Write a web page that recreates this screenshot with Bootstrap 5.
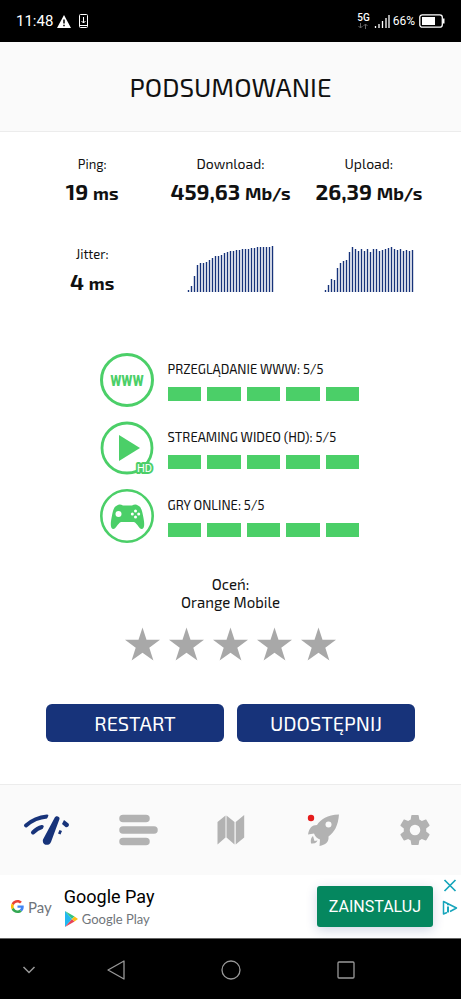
<!DOCTYPE html>
<html lang="pl">
<head>
<meta charset="utf-8">
<meta name="viewport" content="width=device-width, initial-scale=1">
<title>Podsumowanie</title>
<link rel="stylesheet" href="https://cdn.jsdelivr.net/npm/bootstrap@5.3.0/dist/css/bootstrap.min.css">
<style>
  :root { --navy: #17337a; --green: #4bcf68; --panel: #fafafa; --line: #ececec; --grey: #b2b2b2; }
  body { font-family: "Exo 2", Roboto, sans-serif; color: #111; background: #fff; }
  svg { display: block; flex: none; }
  .status-bar { height: 42px; padding: 0 16px; background: #000; color: #fff; font: 15px Roboto, sans-serif; }
  .status-bar .battery-text { font-size: 12px; margin-left: 3px; }
  .net-type { font-size: 10px; line-height: 10px; font-weight: 500; }
  .app-header { height: 90px; background: var(--panel); border-bottom: 1px solid var(--line); }
  .app-header h1 { font-size: 26px; line-height: 32px; font-weight: 400; margin: 0; }
  .metrics { padding: 23px 23px 0; }
  .metric-row { height: 90px; }
  .metric-label { font-size: 13px; line-height: 18px; }
  .metric-label.wide { font-size: 14px; }
  .metric-value { font-size: 22px; line-height: 30px; margin-top: 3px; font-weight: 700; white-space: nowrap; }
  .metric-value small { font-size: 18px; font-weight: 700; }
  .scores { width: 262px; gap: 14px; margin: 55px auto 0; }
  .score-body { flex: 1; margin: 0 2px 0 14px; }
  .score-title { font-size: 13px; line-height: 18px; margin: 7px 0 9px; }
  .blocks { gap: 6px; }
  .blocks span { flex: 1; height: 14px; background: var(--green); }
  .rate-text { font-size: 15px; line-height: 18px; margin-top: 32px; }
  .stars { gap: 9px; margin-top: 16px; }
  .stars button, .tool-btn { border: 0; padding: 0; background: none; color: inherit; }
  .stars button { color: #a8a8a8; }
  .actions { gap: 13px; padding: 0 46px; margin: 43px 0 42px; }
  .btn-navy { --bs-btn-color: #fff; --bs-btn-bg: var(--navy); --bs-btn-hover-color: #fff; --bs-btn-hover-bg: #102862;
    flex: 1; font-size: 20px; line-height: 26px; padding: 6px; border: 0; border-radius: 6px; }
  .tab-bar { height: 91px; background: var(--panel); border-top: 1px solid var(--line); color: var(--grey); }
  .tab-bar a { color: inherit; }
  .tab-bar a.current { color: var(--navy); }
  .ad { height: 63px; padding: 0 3px 0 11px; font-family: Roboto, sans-serif; }
  .pay-name { font: 15px Lato, sans-serif; color: #70757a; }
  .ad-title { font-size: 18px; line-height: 24px; color: #000; }
  .play-name { font: 13px/20px Lato, sans-serif; color: #70757a; }
  .btn-install { --bs-btn-color: #fff; --bs-btn-bg: #05875f; --bs-btn-hover-color: #fff; --bs-btn-hover-bg: #04704f;
    font-size: 16px; line-height: 25px; padding: 8px 12px; border: 0; border-radius: 3px; box-shadow: 0 3px 12px #17337a33; }
  .system-nav { height: 62px; background: #000; color: #999; border-top: 1px solid #666; }
  .system-nav .edge { width: 58px; }
  .system-nav .main-key { flex: 1; }
</style>
<script src="https://cdn.jsdelivr.net/npm/bootstrap@5.3.0/dist/js/bootstrap.bundle.min.js"></script>
</head>
<body class="d-flex flex-column min-vh-100">

<div class="status-bar d-flex align-items-center">
  <span>11:48</span>
  <svg class="ms-1" width="14" height="13" viewBox="0 0 14 13"><path fill="#fff" d="M7 0l7 13H0z"/><path stroke="#000" stroke-width="1.500" d="M7 4.500v4M7 9.700v1.500"/></svg>
  <svg class="ms-2" width="9" height="14" viewBox="0 0 9 14" fill="none" stroke="#fff"><rect x=".5" y=".5" width="8" height="13" rx="1"/><path d="M1 11.500h7M4.500 3v6M2.500 7l2 2 2-2"/></svg>
  <span class="ms-auto net-type text-center">5G
    <svg class="mx-auto" width="10" height="6" viewBox="0 0 10 6" fill="none" stroke="#666"><path d="M2.500 0v5M.5 3l2 2 2-2M7.500 6V1M5.500 3l2-2 2 2"/></svg>
  </span>
  <svg class="ms-1" width="16" height="14" viewBox="0 0 16 14" stroke="#fff" stroke-width="1.300"><path d="M1.500 14v-2M5 14v-4M8.500 14V7M12 14V4M15 14V1"/></svg>
  <span class="battery-text">66%</span>
  <svg class="ms-1" width="26" height="14" viewBox="0 0 26 14"><rect x=".8" y=".8" width="22.500" height="12.400" rx="2.500" fill="none" stroke="#fff" stroke-width="1.300"/><path fill="#fff" d="M3 3h13v8H3zM24 4.500h1.500v5H24z"/></svg>
</div>

<header class="app-header d-flex align-items-center justify-content-center"><h1>PODSUMOWANIE</h1></header>

<main class="flex-grow-1">
  <section class="metrics text-center">
    <div class="row g-0 metric-row">
      <div class="col-4"><div class="metric-label">Ping:</div><div class="metric-value">19 <small>ms</small></div></div>
      <div class="col-4"><div class="metric-label wide">Download:</div><div class="metric-value">459,63 <small>Mb/s</small></div></div>
      <div class="col-4"><div class="metric-label wide">Upload:</div><div class="metric-value">26,39 <small>Mb/s</small></div></div>
    </div>
    <div class="row g-0">
      <div class="col-4"><div class="metric-label">Jitter:</div><div class="metric-value">4 <small>ms</small></div></div>
      <div class="col-4"><svg class="speed-chart mx-auto" role="img" aria-label="Download" data-values="2,6,16,27,29,29,30,32,34,36,36,37,39,40,41,41,42,42,43,43,43,44,44,45,45,45,45,45,46"></svg></div>
      <div class="col-4"><svg class="speed-chart mx-auto" role="img" aria-label="Upload" data-values="2,7,13,12,24,29,31,32,40,45,43,41,43,41,43,40,43,43,41,42,43,44,45,43,42,43,41,42,41,42"></svg></div>
    </div>
  </section>

  <section class="scores d-flex flex-column">
    <div class="d-flex">
      <svg width="54" height="54" viewBox="0 0 54 54"><circle cx="27" cy="27" r="25.500" fill="none" stroke="#4bcf68" stroke-width="3"/><text x="27" y="32.500" text-anchor="middle" font-family="Roboto Condensed, Roboto, sans-serif" font-weight="700" font-size="15" fill="#4bcf68">WWW</text></svg>
      <div class="score-body"><div class="score-title">PRZEGLĄDANIE WWW: 5/5</div><div class="blocks d-flex"><span></span><span></span><span></span><span></span><span></span></div></div>
    </div>
    <div class="d-flex">
      <svg width="54" height="54" viewBox="0 0 54 54"><circle cx="27" cy="27" r="25" fill="none" stroke="#4bcf68" stroke-width="2.800"/><path fill="#4bcf68" d="M19 14l21 13-21 13z"/><text x="44.500" y="51" text-anchor="middle" font-family="Roboto, sans-serif" font-size="11" fill="#fff" stroke="#4bcf68" stroke-width="4" stroke-linejoin="round" paint-order="stroke">HD</text></svg>
      <div class="score-body"><div class="score-title">STREAMING WIDEO (HD): 5/5</div><div class="blocks d-flex"><span></span><span></span><span></span><span></span><span></span></div></div>
    </div>
    <div class="d-flex">
      <svg width="54" height="54" viewBox="0 0 54 54"><circle cx="27" cy="27" r="25.700" fill="none" stroke="#4bcf68" stroke-width="2.600"/><path fill="#4bcf68" d="M17 16.500c2-1.500 4-1 6 0h9c2-1 4-1.500 6 0 3 1 4 5 5 10 1.500 7 2 13-1 13.500-3 .3-4-5-8-7H21c-4 2-5 7.300-8 7-3-.5-2.500-6.500-1-13.500 1-5 2-9 5-10z"/><g fill="#fff"><circle cx="18.500" cy="25" r="3"/><circle cx="35.500" cy="22" r="1.500"/><circle cx="35.500" cy="28" r="1.500"/><circle cx="32.300" cy="25" r="1.500"/><circle cx="38.700" cy="25" r="1.500"/></g></svg>
      <div class="score-body"><div class="score-title">GRY ONLINE: 5/5</div><div class="blocks d-flex"><span></span><span></span><span></span><span></span><span></span></div></div>
    </div>
  </section>

  <section class="text-center">
    <div class="rate-text">Oceń:<br>Orange Mobile</div>
    <div class="stars d-flex justify-content-center" id="stars"></div>
  </section>

  <div class="actions d-flex">
    <button type="button" class="btn btn-navy">RESTART</button>
    <button type="button" class="btn btn-navy">UDOSTĘPNIJ</button>
  </div>
</main>

<nav class="tab-bar row g-0 align-items-center">
  <a href="#test" class="col d-flex justify-content-center current" aria-label="Test">
    <svg width="46" height="32" viewBox="0 0 46 32"><g fill="none" stroke="currentColor" stroke-width="4" stroke-linecap="round"><path d="M3 11.500Q12 3.500 24 2.500M10 18.500q4.500-4.500 9-5.500"/></g><path fill="#fafafa" d="M26.500-1h5l-8 19h-5z"/><path fill="currentColor" d="M41 6l4.500 3.500c1.500 2-1 4.500-3 3.500L39 10zM36.500 16l2.500 1-1.500 3.500-2.500-1z"/><path fill="currentColor" d="M31.500 4c1-3 5.500-2 5 1L28 28c-2 5-9.500 3-8-2.500z"/></svg>
  </a>
  <a href="#historia" class="col d-flex justify-content-center" aria-label="Historia">
    <svg width="39" height="32" viewBox="0 0 39 32" stroke="currentColor" stroke-width="7.500" stroke-linecap="round"><path d="M4 4.500h23M4 16h31M4 27.500h23"/></svg>
  </a>
  <a href="#mapa" class="col d-flex justify-content-center" aria-label="Mapa">
    <svg width="28" height="30" viewBox="0 0 28 30" fill="currentColor"><path d="M.5 7L8.500.5v22L.5 29.500zM9.500.5l8 6.500v22.500l-8-7zM18.700 7l8.500-7v22.500l-8.500 7z"/></svg>
  </a>
  <a href="#ranking" class="col d-flex justify-content-center" aria-label="Ranking">
    <svg width="34" height="32" viewBox="0 0 34 32"><path fill="currentColor" d="M33 .5C21 1 15 5 11 11c-5 0-8 3-9 9.500l6-1c1 3 3 5 6 6l-.5 6.500c6-1 9.500-4 9-9.500C28.500 18 32 12 33 .5z"/><circle cx="22.500" cy="10.500" r="3" fill="#fafafa"/><path fill="currentColor" d="M7 22c-3 3-2 5-2 7.500 3 0 5 0 6.500-3l-3 .5z"/><circle cx="5" cy="4" r="3.200" fill="#e51c1c"/></svg>
  </a>
  <a href="#ustawienia" class="col d-flex justify-content-center" aria-label="Ustawienia">
    <svg width="36" height="36" viewBox="0 0 24 24" fill="currentColor"><path d="M19.430 12.980c.04-.32.07-.64.07-.98s-.03-.66-.07-.98l2.110-1.650c.19-.15.24-.42.12-.64l-2-3.460c-.12-.22-.39-.3-.61-.22l-2.490 1c-.52-.4-1.080-.73-1.690-.98l-.38-2.650C14.460 2.180 14.250 2 14 2h-4c-.25 0-.46.18-.49.42l-.38 2.650c-.61.25-1.170.59-1.690.98l-2.490-1c-.23-.09-.49 0-.61.22l-2 3.460c-.13.22-.07.49.12.64l2.110 1.650c-.04.32-.07.65-.07.98s.03.66.07.98l-2.110 1.650c-.19.15-.24.42-.12.64l2 3.460c.12.22.39.3.61.22l2.490-1c.52.4 1.080.73 1.690.98l.38 2.650c.03.24.24.42.49.42h4c.25 0 .46-.18.49-.42l.38-2.650c.61-.25 1.170-.59 1.690-.98l2.490 1c.23.09.49 0 .61-.22l2-3.460c.12-.22.07-.49-.12-.64zM12 15.500a3.500 3.500 0 1 1 0-7 3.500 3.500 0 0 1 0 7z"/></svg>
  </a>
</nav>

<aside class="ad d-flex align-items-center">
  <svg width="13" height="13" viewBox="0 0 48 48"><path fill="#EA4335" d="M24 9.500c3.540 0 6.710 1.220 9.210 3.600l6.850-6.850C35.900 2.380 30.470 0 24 0 14.620 0 6.510 5.380 2.560 13.220l7.980 6.190C12.430 13.720 17.740 9.500 24 9.500z"/><path fill="#4285F4" d="M46.980 24.550c0-1.570-.15-3.090-.38-4.550H24v9.020h12.940c-.58 2.960-2.260 5.480-4.780 7.180l7.730 6c4.510-4.180 7.090-10.360 7.090-17.650z"/><path fill="#FBBC05" d="M10.530 28.590a14.500 14.500 0 0 1 0-9.180l-7.980-6.190a24 24 0 0 0 0 21.560z"/><path fill="#34A853" d="M24 48c6.480 0 11.930-2.130 15.890-5.810l-7.730-6c-2.150 1.450-4.920 2.300-8.160 2.300-6.260 0-11.570-4.220-13.470-9.910l-7.980 6.190C6.510 42.620 14.620 48 24 48z"/></svg>
  <span class="pay-name ms-1">Pay</span>
  <div class="ms-2 ps-1">
    <div class="ad-title">Google Pay</div>
    <div class="d-flex align-items-center gap-1">
      <svg width="14" height="16" viewBox="0 0 14 16"><path fill="#22b8f0" d="M1 0v16l7-8z"/><path fill="#35c481" d="M1 0l9.500 5.500L8 8z"/><path fill="#e84357" d="M1 16l9.500-5.500L8 8z"/><path fill="#fdbd13" d="M10.500 5.500L14 8l-3.500 2.500L8 8z"/></svg>
      <span class="play-name">Google Play</span>
    </div>
  </div>
  <button type="button" class="btn btn-install ms-auto">ZAINSTALUJ</button>
  <div class="d-flex flex-column align-self-start gap-2 ms-2 pt-1">
    <button type="button" class="tool-btn" aria-label="Zamknij reklamę"><svg width="17" height="13" viewBox="0 0 17 13" stroke="#16a5bb" stroke-width="1.700"><path d="M3.500 1l11 11M14.500 1l-11 11"/></svg></button>
    <button type="button" class="tool-btn" aria-label="Informacje o reklamie"><svg width="17" height="16" viewBox="0 0 17 16" fill="none" stroke="#16a5bb" stroke-width="1.500" stroke-linejoin="round"><path d="M6 12.500L2.500 14V1.500L15.500 8 9 11.500"/><path d="M7 6.500v6M7 3.500v1.800" stroke-width="2"/></svg></button>
  </div>
</aside>

<nav class="system-nav d-flex align-items-center" aria-label="System">
  <button type="button" class="tool-btn edge" aria-label="Ukryj"><svg class="mx-auto" width="14" height="8" viewBox="0 0 14 8" fill="none" stroke="currentColor" stroke-width="1.500"><path d="M1.500 1L7 6.500 12.500 1"/></svg></button>
  <button type="button" class="tool-btn main-key" aria-label="Wstecz"><svg class="mx-auto" width="18" height="20" viewBox="0 0 18 20" fill="none" stroke="currentColor" stroke-width="1.300" stroke-linejoin="round"><path d="M17 1v18L1 10z"/></svg></button>
  <button type="button" class="tool-btn main-key" aria-label="Ekran główny"><svg class="mx-auto" width="20" height="20" viewBox="0 0 20 20" fill="none" stroke="currentColor" stroke-width="1.300"><circle cx="10" cy="10" r="9"/></svg></button>
  <button type="button" class="tool-btn main-key" aria-label="Ostatnie"><svg class="mx-auto" width="18" height="18" viewBox="0 0 18 18" fill="none" stroke="currentColor" stroke-width="1.300"><rect x="1" y="1" width="16" height="16" rx="1"/></svg></button>
  <span class="edge"></span>
</nav>

<script>
  // Bar charts: one thin vertical stroke per sample
  document.querySelectorAll('.speed-chart').forEach(function (svg) {
    var values = svg.dataset.values.split(',').map(Number);
    var width = values.length * 3, height = 47;
    svg.setAttribute('width', width);
    svg.setAttribute('height', height);
    var d = values.map(function (v, i) { return 'M' + (i * 3 + 1.5) + ' ' + height + 'v-' + v; }).join('');
    svg.innerHTML = '<path stroke="#17337a" stroke-width="1.400" d="' + d + '"/>';
  });
  // Rating stars
  for (var n = 1; n <= 5; n++) {
    document.getElementById('stars').insertAdjacentHTML('beforeend',
      '<button type="button" aria-label="Ocena ' + n + '"><svg width="35" height="34" viewBox="0 0 35 33" fill="currentColor"><path d="M17.500 0l4 12.300H35L24.300 20.200 28.400 33 17.500 25.200 6.600 33l4.100-12.800L0 12.300h13.500z"/></svg></button>');
  }
</script>
</body>
</html>
